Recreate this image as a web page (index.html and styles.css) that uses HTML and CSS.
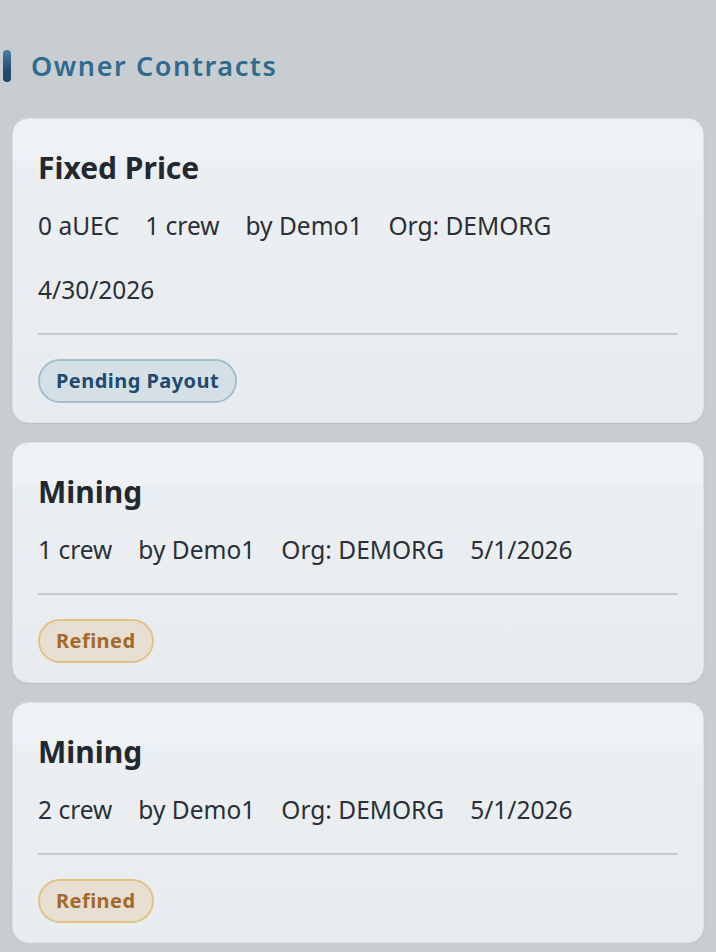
FILE: index.html
```html
<!DOCTYPE html>
<html lang="en">
<head>
<meta charset="utf-8">
<title>Owner Contracts</title>
<link rel="stylesheet" href="styles.css">
</head>
<body>
<main class="page">
  <h2 class="section-title"><span class="accent"></span><span class="section-text">Owner Contracts</span></h2>
  <div class="card-list">
    <article class="card">
      <h3 class="card-title">Fixed Price</h3>
      <div class="meta">
        <span>0 aUEC</span>
        <span>1 crew</span>
        <span>by Demo1</span>
        <span>Org: DEMORG</span>
        <span>4/30/2026</span>
      </div>
      <div class="card-footer"><span class="badge badge-payout">Pending Payout</span></div>
    </article>
    <article class="card">
      <h3 class="card-title">Mining</h3>
      <div class="meta">
        <span>1 crew</span>
        <span>by Demo1</span>
        <span>Org: DEMORG</span>
        <span>5/1/2026</span>
      </div>
      <div class="card-footer"><span class="badge badge-refined">Refined</span></div>
    </article>
    <article class="card">
      <h3 class="card-title">Mining</h3>
      <div class="meta">
        <span>2 crew</span>
        <span>by Demo1</span>
        <span>Org: DEMORG</span>
        <span>5/1/2026</span>
      </div>
      <div class="card-footer"><span class="badge badge-refined">Refined</span></div>
    </article>
  </div>
</main>
</body>
</html>
```

FILE: styles.css
```css
html, body {
  margin: 0;
  padding: 0;
}
body {
  background: #c8cdd1;
  font-family: "Noto Sans", "Open Sans", sans-serif;
  color: #262c32;
}
.page {
  padding: 46px 12px 0 12px;
}
.section-title {
  display: flex;
  align-items: center;
  gap: 20px;
  margin: 0 0 32px -9px;
  height: 40px;
  font-size: 27px;
  font-weight: 600;
  letter-spacing: 1.6px;
  color: #2f6a8f;
  line-height: 40px;
}
.accent {
  display: block;
  width: 8px;
  height: 32px;
  border-radius: 4px;
  background: linear-gradient(180deg, #4a7ea3 0%, #244f72 60%, #1d4566 100%);
  flex: none;
}
.card-list {
  display: flex;
  flex-direction: column;
  gap: 19px;
}
.card {
  border: 1px solid #dde2e6;
  border-radius: 16px;
  background: linear-gradient(180deg, #eef2f5 0px, #eef2f5 40px, #ebeff2 44px, #e8ecef 100%);
  box-shadow: 0 1px 2px rgba(60, 70, 80, 0.10);
  padding: 30px 25px 19px 25px;
}
.card-title {
  margin: 0 0 20px 0;
  font-size: 30px;
  line-height: 38px;
  font-weight: 700;
  color: #22282e;
}
.meta {
  display: flex;
  flex-wrap: wrap;
  column-gap: 26px;
  row-gap: 26px;
  font-size: 24.5px;
  line-height: 38px;
  color: #2a3036;
}
.card-footer {
  margin-top: 24px;
  border-top: 2px solid #c6cbcf;
  padding-top: 24px;
  display: flex;
}
.badge {
  display: inline-block;
  box-sizing: border-box;
  height: 44px;
  padding: 8px 16px;
  border-radius: 22px;
  border: 2px solid;
  font-size: 20px;
  line-height: 24px;
  font-weight: 700;
  letter-spacing: 0.45px;
}
.badge-payout {
  background: #d4e0e5;
  border-color: #a3bfcc;
  color: #214a6e;
}
.badge-refined {
  background: #e7dfd1;
  border-color: #e0c285;
  color: #a5692b;
}
```
